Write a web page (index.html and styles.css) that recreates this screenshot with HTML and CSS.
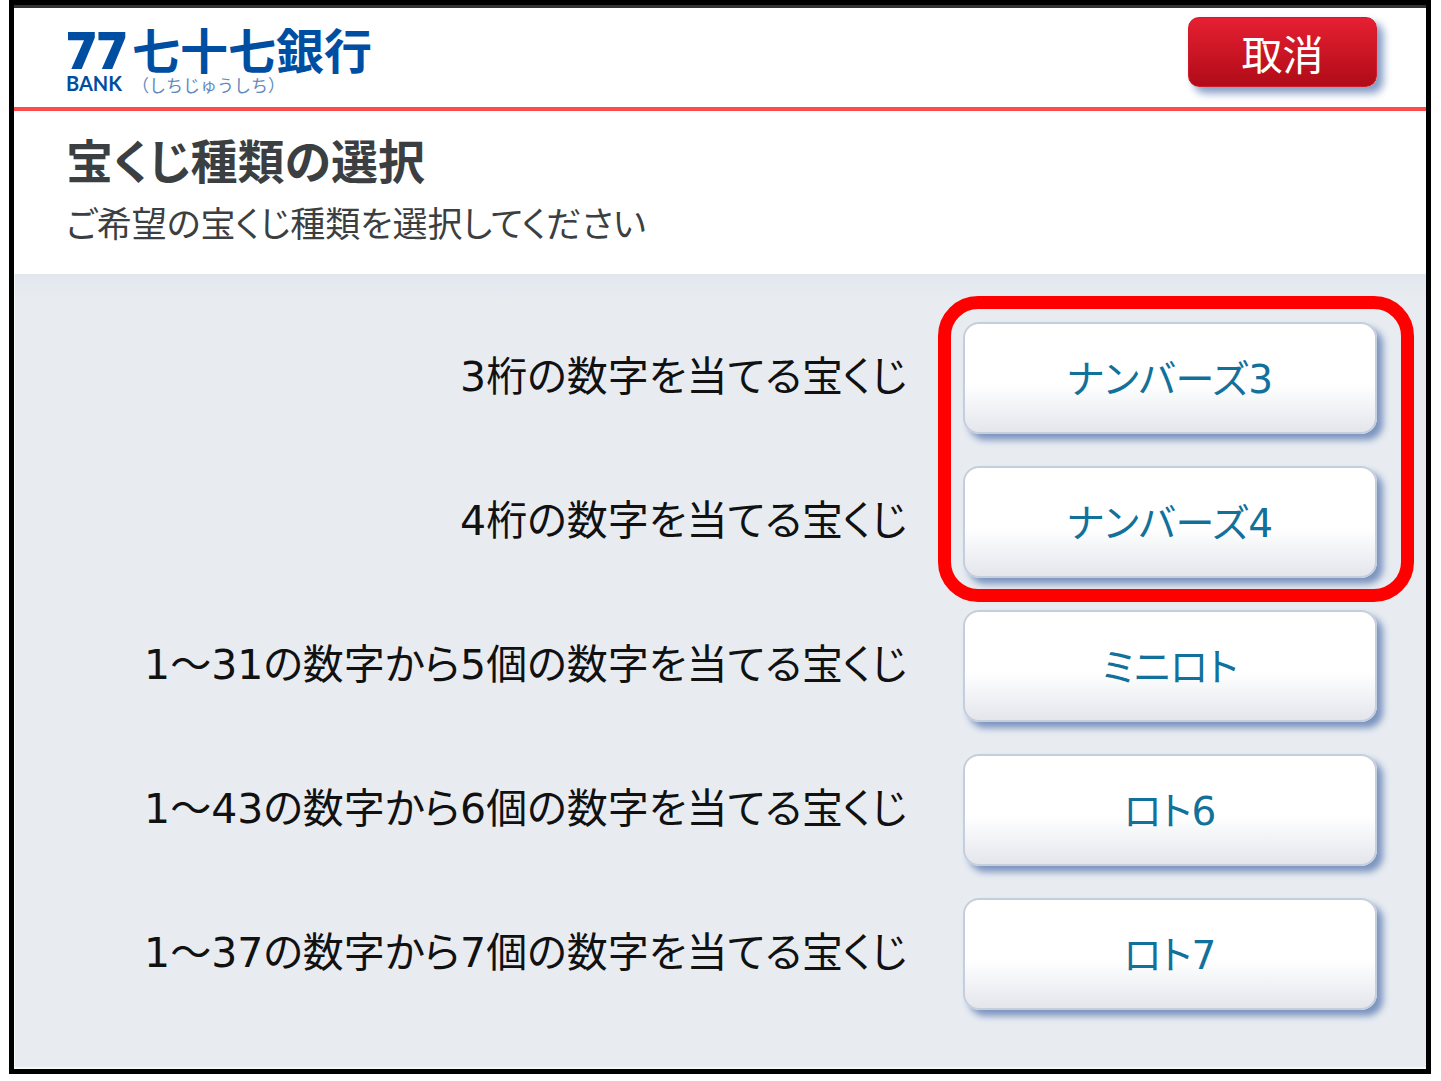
FILE: index.html
```
<!DOCTYPE html>
<html lang="ja">
<head>
    <meta charset="UTF-8">
    <meta name="viewport" content="width=device-width, initial-scale=1">
    <title>宝くじ種類の選択</title>
    <link rel="stylesheet" href="styles.css">
</head>
<body>
    <div class="screen">
        <header class="header">
            <div class="logo">
                <div class="logo-mark">
                    <span class="logo-77">77</span>
                    <span class="logo-bank">BANK</span>
                </div>
                <div class="logo-name">
                    <span class="logo-kanji">七十七銀行</span>
                    <span class="logo-kana">（しちじゅうしち）</span>
                </div>
            </div>
            <button type="button" class="cancel">取消</button>
        </header>

        <div class="heading">
            <h1>宝くじ種類の選択</h1>
            <p>ご希望の宝くじ種類を選択してください</p>
        </div>

        <main class="content">
            <div class="group highlight">
                <div class="row">
                    <label for="numbers3"><span class="num">3</span>桁の数字を当てる宝くじ</label>
                    <button type="button" id="numbers3" class="choice">ナンバーズ<span class="num">3</span></button>
                </div>
                <div class="row">
                    <label for="numbers4"><span class="num">4</span>桁の数字を当てる宝くじ</label>
                    <button type="button" id="numbers4" class="choice">ナンバーズ<span class="num">4</span></button>
                </div>
            </div>
            <div class="group">
                <div class="row">
                    <label for="miniloto"><span class="num">1</span>～<span class="num">31</span>の数字から<span class="num">5</span>個の数字を当てる宝くじ</label>
                    <button type="button" id="miniloto" class="choice">ミニロト</button>
                </div>
                <div class="row">
                    <label for="loto6"><span class="num">1</span>～<span class="num">43</span>の数字から<span class="num">6</span>個の数字を当てる宝くじ</label>
                    <button type="button" id="loto6" class="choice">ロト<span class="num">6</span></button>
                </div>
                <div class="row">
                    <label for="loto7"><span class="num">1</span>～<span class="num">37</span>の数字から<span class="num">7</span>個の数字を当てる宝くじ</label>
                    <button type="button" id="loto7" class="choice">ロト<span class="num">7</span></button>
                </div>
            </div>
        </main>
    </div>
</body>
</html>
```
FILE: styles.css
```
* {
    box-sizing: border-box;
}

body {
    margin: 0 10px 7px 9px;
    background: #fff;
    font-family: "Noto Sans CJK JP", sans-serif;
    font-feature-settings: "palt";
}

button {
    font-family: inherit;
    font-feature-settings: inherit;
    cursor: pointer;
}

.screen {
    display: flex;
    flex-direction: column;
    min-height: calc(100vh - 7px);
    border: 5px solid #000;
    box-shadow: 2px 0 1px #666;
}

/* header */
.header {
    display: flex;
    justify-content: space-between;
    align-items: flex-start;
    height: 106px;
    padding: 9px 49px 0 52px;
    border-top: 3px solid #333;
    border-bottom: 4px solid #ff4b4b;
}

.logo {
    display: flex;
    gap: 8px;
    padding-top: 8px;
    color: #004ea2;
    white-space: nowrap;
}

.logo-mark,
.logo-name {
    display: flex;
    flex-direction: column;
}

.logo-mark {
    width: 58px;
}

.logo-77 {
    font-family: "Open Sans", sans-serif;
    font-size: 52px;
    font-weight: 800;
    line-height: 48px;
}

.logo-bank {
    font-family: Lato, sans-serif;
    font-size: 20px;
    font-weight: 700;
    line-height: 20px;
}

.logo-kanji {
    font-size: 48px;
    font-weight: 700;
    line-height: 46px;
    font-feature-settings: normal;
}

.logo-kana {
    font-size: 17px;
    line-height: 28px;
    color: #6189bd;
    font-feature-settings: normal;
}

.cancel {
    width: 189px;
    height: 70px;
    padding: 0;
    border: 1px solid #cf1c2c;
    border-radius: 11px;
    background: linear-gradient(#e62032, #b00b18);
    box-shadow: 6px 6px 8px #7f99c3;
    color: #fff;
    font-size: 41px;
    line-height: 60px;
}

/* title */
.heading {
    height: 163px;
    padding: 18px 52px 0;
    color: #3c3f41;
}

.heading h1 {
    margin: 0;
    font-size: 47px;
    font-weight: 700;
    line-height: 60px;
}

.heading p {
    margin: 8px 0 0;
    font-size: 35px;
    line-height: 50px;
}

/* lottery list */
.content {
    flex: 1;
    display: flex;
    flex-direction: column;
    gap: 32px;
    padding: 48px 49px 48px;
    border: solid #f3f8f9;
    border-width: 0 0 2px 1px;
    background: linear-gradient(#e2e7ef, #e8ecf1 24px);
}

.group {
    position: relative;
    display: flex;
    flex-direction: column;
    gap: 32px;
}

.highlight::after {
    content: "";
    position: absolute;
    box-sizing: border-box;
    top: -26px;
    right: -37px;
    bottom: -24px;
    width: 476px;
    border: 13px solid #f00;
    border-radius: 40px;
    pointer-events: none;
}

.row {
    display: flex;
    justify-content: flex-end;
    align-items: center;
    gap: 56px;
    color: #111;
    font-size: 41px;
    line-height: 64px;
    white-space: nowrap;
}

.row label {
    padding-bottom: 6px;
}

.num {
    font-family: "DejaVu Sans", sans-serif;
}

.choice {
    width: 414px;
    height: 112px;
    padding: 0 0 4px;
    border: 2px solid #c5cedb;
    border-radius: 16px;
    background: linear-gradient(#fff 55%, #e3e6ec);
    box-shadow: 6px 6px 7px #7b94c0;
    color: #12719a;
    font-size: 39px;
}
```
